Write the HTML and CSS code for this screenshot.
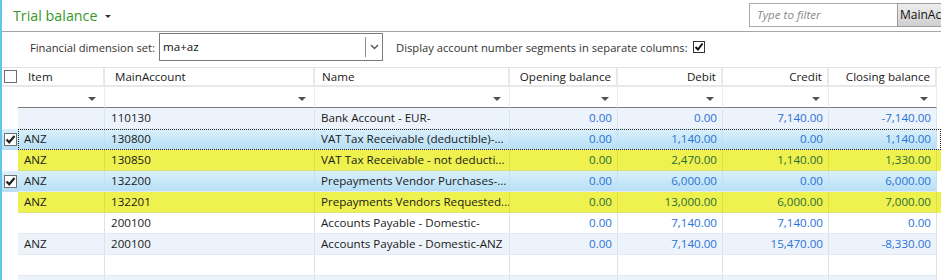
FILE: index.html
```
<!DOCTYPE html>
<html lang="en">
<head>
  <meta charset="UTF-8">
  <title>Trial balance</title>
  <link rel="stylesheet" href="styles.css">
</head>
<body>
  <div class="screen">
    <div class="topbar">
      <h1 class="title">Trial balance</h1>
      <span class="title-caret"></span>
      <div class="quick-filter">
        <span class="filter-input">Type to filter</span>
        <span class="filter-field">MainAccount</span>
      </div>
    </div>

    <div class="options">
      <span class="opt-label">Financial dimension set:</span>
      <div class="combo">
        <span class="combo-value">ma+az</span>
        <span class="combo-btn">
          <svg width="9" height="6" viewBox="0 0 9 6"><path d="M1 1 L4.5 4.5 L8 1" stroke="#555" stroke-width="1.4" fill="none"/></svg>
        </span>
      </div>
      <span class="opt-label segments">Display account number segments in separate columns:</span>
      <span class="box small checked">
        <svg width="10" height="10" viewBox="0 0 10 10"><path d="M1.5 5 L4 7.5 L8.5 1.5" stroke="#111" stroke-width="2" fill="none"/></svg>
      </span>
    </div>

    <div class="grid">
      <div class="row head">
        <div class="check"><span class="box"></span></div>
        <div class="cells">
          <div class="cell wide-pad">Item</div>
          <div class="cell wide-pad">MainAccount</div>
          <div class="cell">Name</div>
          <div class="cell num">Opening balance</div>
          <div class="cell num">Debit</div>
          <div class="cell num">Credit</div>
          <div class="cell num">Closing balance</div>
        </div>
      </div>

      <div class="row filters">
        <div class="check"></div>
        <div class="cells">
          <div class="cell"><span class="arrow"></span></div>
          <div class="cell"><span class="arrow"></span></div>
          <div class="cell"><span class="arrow"></span></div>
          <div class="cell"><span class="arrow"></span></div>
          <div class="cell"><span class="arrow"></span></div>
          <div class="cell"><span class="arrow"></span></div>
          <div class="cell"><span class="arrow"></span></div>
        </div>
      </div>

      <div class="row alt">
        <div class="check"></div>
        <div class="cells">
          <div class="cell"></div>
          <div class="cell">110130</div>
          <div class="cell">Bank Account - EUR-</div>
          <div class="cell num">0.00</div>
          <div class="cell num">0.00</div>
          <div class="cell num">7,140.00</div>
          <div class="cell num">-7,140.00</div>
        </div>
      </div>

      <div class="row selected focus">
        <div class="check">
          <span class="box checked">
            <svg width="11" height="11" viewBox="0 0 11 11"><path d="M1.5 5.5 L4.2 8.3 L9.5 2" stroke="#222" stroke-width="2.2" fill="none"/></svg>
          </span>
        </div>
        <div class="cells">
          <div class="cell">ANZ</div>
          <div class="cell">130800</div>
          <div class="cell">VAT Tax Receivable (deductible)-...</div>
          <div class="cell num">0.00</div>
          <div class="cell num">1,140.00</div>
          <div class="cell num">0.00</div>
          <div class="cell num">1,140.00</div>
        </div>
      </div>

      <div class="row marked">
        <div class="check"></div>
        <div class="cells">
          <div class="cell">ANZ</div>
          <div class="cell">130850</div>
          <div class="cell">VAT Tax Receivable - not deducti...</div>
          <div class="cell num">0.00</div>
          <div class="cell num">2,470.00</div>
          <div class="cell num">1,140.00</div>
          <div class="cell num">1,330.00</div>
        </div>
      </div>

      <div class="row selected">
        <div class="check">
          <span class="box checked">
            <svg width="11" height="11" viewBox="0 0 11 11"><path d="M1.5 5.5 L4.2 8.3 L9.5 2" stroke="#222" stroke-width="2.2" fill="none"/></svg>
          </span>
        </div>
        <div class="cells">
          <div class="cell">ANZ</div>
          <div class="cell">132200</div>
          <div class="cell">Prepayments Vendor Purchases-...</div>
          <div class="cell num">0.00</div>
          <div class="cell num">6,000.00</div>
          <div class="cell num">0.00</div>
          <div class="cell num">6,000.00</div>
        </div>
      </div>

      <div class="row marked">
        <div class="check"></div>
        <div class="cells">
          <div class="cell">ANZ</div>
          <div class="cell">132201</div>
          <div class="cell">Prepayments Vendors Requested...</div>
          <div class="cell num">0.00</div>
          <div class="cell num">13,000.00</div>
          <div class="cell num">6,000.00</div>
          <div class="cell num">7,000.00</div>
        </div>
      </div>

      <div class="row">
        <div class="check"></div>
        <div class="cells">
          <div class="cell"></div>
          <div class="cell">200100</div>
          <div class="cell">Accounts Payable - Domestic-</div>
          <div class="cell num">0.00</div>
          <div class="cell num">7,140.00</div>
          <div class="cell num">7,140.00</div>
          <div class="cell num">0.00</div>
        </div>
      </div>

      <div class="row alt">
        <div class="check"></div>
        <div class="cells">
          <div class="cell">ANZ</div>
          <div class="cell">200100</div>
          <div class="cell">Accounts Payable - Domestic-ANZ</div>
          <div class="cell num">0.00</div>
          <div class="cell num">7,140.00</div>
          <div class="cell num">15,470.00</div>
          <div class="cell num">-8,330.00</div>
        </div>
      </div>

      <div class="row">
        <div class="check"></div>
        <div class="cells">
          <div class="cell"></div><div class="cell"></div><div class="cell"></div><div class="cell"></div>
          <div class="cell"></div><div class="cell"></div><div class="cell"></div>
        </div>
      </div>

      <div class="row alt">
        <div class="check"></div>
        <div class="cells">
          <div class="cell"></div><div class="cell"></div><div class="cell"></div><div class="cell"></div>
          <div class="cell"></div><div class="cell"></div><div class="cell"></div>
        </div>
      </div>
    </div>
  </div>
</body>
</html>
```

FILE: styles.css
```
body {
  margin: 0;
  background: #ffffff;
  font-family: "Open Sans", "Noto Sans", sans-serif;
  font-size: 11.6px;
  color: #1a1a1a;
}

.screen {
  width: 939px;
  height: 280px;
  border-left: 2px solid #64c4ea;
  overflow: hidden;
}

/* title bar */

.topbar {
  display: flex;
  align-items: center;
  height: 31px;
  border-bottom: 1px solid #a6a6a6;
}

.title {
  margin: 0 0 0 11px;
  font-size: 14.3px;
  font-weight: normal;
  color: #36982a;
}

.title-caret {
  width: 0;
  height: 0;
  margin: 2px 0 0 8px;
  border-left: 3px solid transparent;
  border-right: 3px solid transparent;
  border-top: 3px solid #333;
}

/* the field button is cut off by the window edge */
.quick-filter {
  display: flex;
  align-self: flex-start;
  width: 192px;
  height: 24px;
  margin: 3px 0 0 auto;
  overflow: hidden;
}

.filter-input {
  flex: none;
  width: 140px;
  padding-left: 7px;
  border: 1px solid #ababab;
  border-right: 0;
  line-height: 22px;
  font-style: italic;
  color: #8a8a8a;
}

.filter-field {
  flex: none;
  width: 80px;
  padding-left: 2px;
  border: 1px solid #9c9c9c;
  background: linear-gradient(#eeeeee, #cfcfcf);
  line-height: 22px;
  color: #111;
  font-size: 12px;
  white-space: nowrap;
}

/* options row */

.options {
  display: flex;
  align-items: center;
  height: 30px;
  padding: 0 0 5px 28px;
  font-size: 11.2px;
}

.opt-label {
  color: #333;
}

.combo {
  display: flex;
  width: 222px;
  height: 26px;
  margin-left: 4px;
  border: 1px solid #7a7a7a;
  font-size: 11.6px;
}

.combo-value {
  flex: 1;
  padding-left: 3px;
  line-height: 26px;
  color: #111;
}

.combo-btn {
  width: 16px;
  display: flex;
  justify-content: center;
  align-items: center;
  border-left: 1px solid #8c8c8c;
  margin: 3px 0;
}

.segments {
  margin-left: 13px;
}

.box {
  display: flex;
  justify-content: center;
  align-items: center;
  width: 11px;
  height: 11px;
  border: 1px solid #6f6f6f;
  background: #ffffff;
}

.box.small {
  width: 10px;
  height: 10px;
  margin-left: 5px;
  border-color: #333;
}

/* grid */

.grid {
  border-top: 1px solid #e2e2e2;
}

.row {
  display: flex;
}

.check {
  width: 16px;
  flex: none;
  display: flex;
  justify-content: center;
  align-items: center;
}

.cells {
  flex: 1;
  display: grid;
  grid-template-columns: 87px 210px 195px 108px 105px 106px 108px;
}

.cell {
  height: 20px;
  line-height: 20px;
  padding: 0 5px 0 6px;
  border-right: 1px solid #dbe3ec;
  border-bottom: 1px solid #e3e9f1;
  white-space: nowrap;
  overflow: hidden;
}

.num {
  text-align: right;
  color: #2a72d6;
}

.head .cell {
  height: 17px;
  line-height: 17px;
  padding-left: 7px;
  border-right: 2px solid #e8e8e8;
  border-bottom: 2px solid #e8e8e8;
  color: #1a1a1a;
}

.head .cell.wide-pad {
  padding-left: 10px;
}

.head .check {
  border-bottom: 2px solid #e8e8e8;
}

.filters .cell {
  display: flex;
  justify-content: flex-end;
  align-items: center;
  padding: 4px 8px 0 0;
  height: 16px;
  border-right: 1px solid #ececec;
  border-bottom: 1px solid #7c7c7c;
}

.arrow {
  width: 0;
  height: 0;
  border-left: 4px solid transparent;
  border-right: 4px solid transparent;
  border-top: 4px solid #505050;
}

.alt .cell {
  background: #edf3fb;
}

.selected .check,
.selected .cell {
  background: linear-gradient(#dbf0fc, #b6dff5);
}

.selected .cell {
  border-right-color: #c6dff0;
}

.focus .cells {
  outline: 1px dotted #222;
  outline-offset: -1px;
}

.marked .cells {
  background: #eff24e;
}

.marked .cell {
  border-right-color: #dde040;
  border-bottom-color: #d9e27a;
}

.marked .num {
  color: #2b6d3a;
}
```
